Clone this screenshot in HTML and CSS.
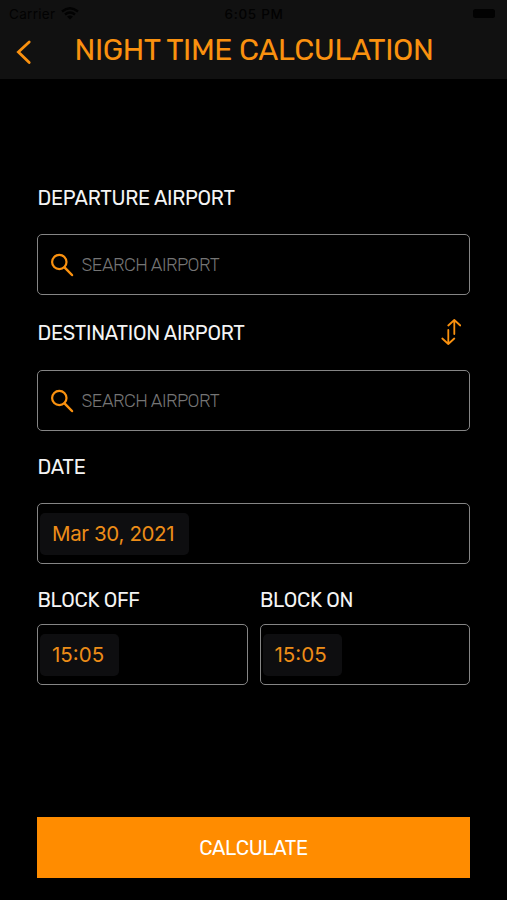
FILE: index.html
```html
<!DOCTYPE html>
<html lang="en">
<head>
<meta charset="utf-8">
<title>Night Time Calculation</title>
<link rel="stylesheet" href="styles.css">
</head>
<body>
<header class="top">
  <div class="status">
    <div class="carrier"><span class="carrier-name">Carrier</span>
      <svg class="wifi" viewBox="0 0 18 13"><path d="M1 4.500Q9-2 17 4.500M4 7.500Q9 3.500 14 7.500" fill="none" stroke="currentColor" stroke-width="2.300"/><path d="M6 9.500Q9 7.500 12 9.500L9 12.500Z" fill="currentColor"/></svg>
    </div>
    <span class="clock">6:05 PM</span>
    <svg class="battery" viewBox="0 0 26 11"><rect y="1" width="22" height="9" rx="2.500" fill="currentColor"/></svg>
  </div>
  <div class="nav">
    <svg class="back" viewBox="0 0 16 26"><path d="M13.200 3L2.400 13L13.200 23.500" fill="none" stroke="currentColor" stroke-width="2.800" stroke-linecap="round"/></svg>
    <h1>NIGHT TIME CALCULATION</h1>
  </div>
</header>
<main class="form">
  <section class="field departure">
    <label class="label">DEPARTURE AIRPORT</label>
    <div class="box"><svg class="search" viewBox="0 0 24 24"><circle cx="8.300" cy="9" r="7.200" fill="none" stroke="currentColor" stroke-width="2.200"/><path d="M13.500 14.300L21 22" stroke="currentColor" stroke-width="2.500" stroke-linecap="round"/></svg><span class="hint">SEARCH AIRPORT</span></div>
  </section>
  <section class="field destination">
    <div class="row"><label class="label">DESTINATION AIRPORT</label><svg class="swap" viewBox="0 0 20 28"><path d="M7.300 12V26M1.300 20.500L7.300 26L13.300 20.500M13.300 16V2M7.300 7.500L13.300 2L19.300 7.500" fill="none" stroke="currentColor" stroke-width="1.800" stroke-linecap="round" stroke-linejoin="round"/></svg></div>
    <div class="box"><svg class="search" viewBox="0 0 24 24"><circle cx="8.300" cy="9" r="7.200" fill="none" stroke="currentColor" stroke-width="2.200"/><path d="M13.500 14.300L21 22" stroke="currentColor" stroke-width="2.500" stroke-linecap="round"/></svg><span class="hint">SEARCH AIRPORT</span></div>
  </section>
  <section class="field date">
    <label class="label">DATE</label>
    <div class="box value"><span class="pill wide">Mar 30, 2021</span></div>
  </section>
  <div class="times">
    <section class="field time"><label class="label">BLOCK OFF</label><div class="box value"><span class="pill">15:05</span></div></section>
    <section class="field time"><label class="label">BLOCK ON</label><div class="box value"><span class="pill">15:05</span></div></section>
  </div>
  <button class="calculate">CALCULATE</button>
</main>
</body>
</html>
```
FILE: styles.css
```css
* { box-sizing: border-box; }
body { margin: 0; height: 900px; overflow: hidden; background: #000; color: #f4f4f4; font-family: Rubik, Roboto, sans-serif; }
svg { display: block; flex: none; }
.top { height: 79px; background: #111; color: #fa910f; }
.status { height: 27px; padding: 0 8px 0 9px; display: grid; grid-template-columns: 1fr auto 1fr; align-items: center; color: #020202; font: 13.5px Inter, sans-serif; }
.carrier { display: flex; align-items: center; gap: 6px; }
.carrier-name { letter-spacing: .3px; }
.wifi { width: 18px; height: 13px; margin-top: -1px; }
.clock { font-weight: 500; letter-spacing: .7px; }
.battery { width: 26px; height: 11px; justify-self: end; }
.nav { height: 52px; display: flex; padding-left: 16px; }
.back { width: 16px; height: 26px; margin-top: 12px; }
h1 { margin: 4px 0 0 42.5px; font-size: 30px; line-height: 38px; font-weight: 400; letter-spacing: -.41px; white-space: nowrap; }
.form { padding: 107px 37px 0; }
.field { display: flex; flex-direction: column; }
.label { padding-left: .5px; font-size: 20px; line-height: 25px; height: 24px; letter-spacing: -.3px; white-space: nowrap; }
.box { height: 61px; border: 1px solid #858585; border-radius: 5px; display: flex; align-items: center; padding-left: 13px; }
.departure .box { margin-top: 24px; }
.search { width: 24px; height: 24px; color: #fa910f; }
.hint { margin-left: 6.5px; font-size: 18px; color: #757575; font-weight: 300; letter-spacing: -.56px; }
.destination { margin-top: 23px; }
.row { display: flex; justify-content: space-between; height: 28px; align-items: center; padding-right: 9px; }
.row .label { line-height: 26px; }
.swap { width: 20px; height: 28px; color: #fa910f; }
.destination .box { margin-top: 24px; }
.date { margin-top: 24px; }
.date .box { margin-top: 24px; }
.box.value { padding-left: 2px; }
.pill { height: 42px; width: 79px; padding-left: 12px; border-radius: 5px; background: #0e0e10; color: #ed8d18; font: 20.5px/42px Inter, sans-serif; white-space: nowrap; }
.pill.wide { width: 149px; letter-spacing: -.36px; }
.times { display: grid; grid-template-columns: 1fr 1fr; gap: 12px; margin-top: 24px; }
.time .box { margin-top: 12px; }
.calculate { display: block; width: 100%; height: 61px; margin-top: 132px; padding: 0; border: 0; background: #ff8c00; color: #fff; font: 20px Rubik, Roboto, sans-serif; letter-spacing: -.35px; }
```
